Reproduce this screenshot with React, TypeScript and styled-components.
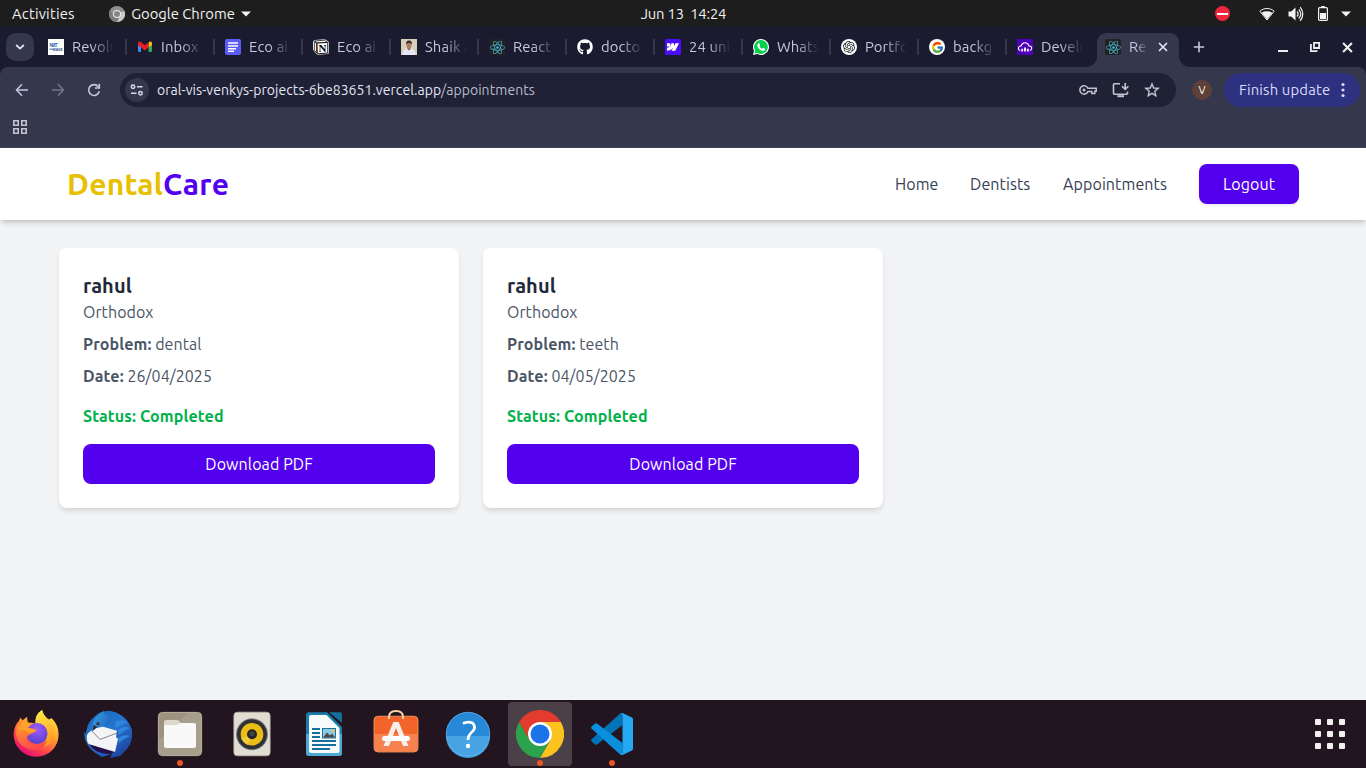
import React from "react";
import styled, { createGlobalStyle } from "styled-components";
import { FaGithub, FaReact, FaWhatsapp } from "react-icons/fa";
import { SiOpenai, SiWebflow } from "react-icons/si";
import { FcGoogle } from "react-icons/fc";

const GlobalStyle = createGlobalStyle`
  *, *::before, *::after { box-sizing: border-box; }
  body { margin: 0; background: #f3f4f6; font-family: Ubuntu, "Noto Sans", sans-serif; }
  h2, p { margin: 0; }
  button { font: inherit; border: 0; padding: 0; }
  svg { display: block; flex: none; }
`;

const Desktop = styled.div`
  width: 1366px;
  height: 768px;
  display: flex;
  flex-direction: column;
  overflow: hidden;
`;

/* ---------- System bar ---------- */

const SystemBar = styled.header`
  height: 27px;
  flex: none;
  display: grid;
  grid-template-columns: 1fr auto 1fr;
  align-items: center;
  background: #1d1d1d;
  color: #f2f2f2;
  font-size: 14.8px;
  line-height: 27px;
  white-space: pre;
`;

const SystemLeft = styled.div`
  display: flex;
  align-items: center;
  padding-left: 12px;
`;

const Label = styled.span<{ $ls?: number }>`
  letter-spacing: ${(p) => p.$ls ?? 0}px;
`;

const Clock = styled(Label)`
  padding-left: 1px;
`;

const AppMenu = styled.div`
  display: flex;
  align-items: center;
  gap: 6px;
  margin-left: 34.5px;
`;

const SystemRight = styled.div`
  display: flex;
  align-items: center;
  justify-content: flex-end;
  padding-right: 15px;
`;

const StatusIcon = styled.span<{ $gap: number }>`
  margin-left: ${(p) => p.$gap}px;
`;

/* ---------- Browser chrome ---------- */

const TabStrip = styled.div`
  height: 40px;
  flex: none;
  display: flex;
  background: #1a1b2f;
  padding-left: 6px;
`;

const TabSearch = styled.button`
  width: 28px;
  height: 28px;
  margin: 6px 6px 0 0;
  border-radius: 10px;
  background: #35374d;
  display: flex;
  align-items: center;
  justify-content: center;
`;

const TabList = styled.div`
  width: 1057px;
  flex: none;
  display: grid;
  grid-template-columns: 89px repeat(11, 88px);
`;

const Tab = styled.div`
  height: 40px;
  display: flex;
  align-items: center;
  padding-left: 8px;
`;

const Favicon = styled.span<{ $bg?: string; $radius?: number }>`
  width: 16px;
  height: 16px;
  flex: none;
  display: flex;
  align-items: center;
  justify-content: center;
  overflow: hidden;
  background: ${(p) => p.$bg ?? "transparent"};
  border-radius: ${(p) => p.$radius ?? 0}px;
`;

const TabTitle = styled.span<{ $width?: number }>`
  width: ${(p) => p.$width ?? 42}px;
  flex: none;
  margin-left: 8px;
  overflow: hidden;
  white-space: nowrap;
  font-size: 14.8px;
  line-height: 20px;
  letter-spacing: 0.12px;
  color: #c5c7e0;
  mask-image: linear-gradient(to right, #000 calc(100% - ${(p) => (p.$width ? 12 : 22)}px), transparent);
`;

const Separator = styled.span`
  width: 2px;
  height: 16px;
  margin-left: 10px;
  background: #35374d;

  ${Tab}:first-child & { margin-left: 11px; }
`;

const ActiveTab = styled.div`
  position: relative;
  width: 82px;
  height: 34px;
  flex: none;
  margin: 6px 0 0;
  padding: 0 11px 6px 8px;
  border-radius: 9px 9px 0 0;
  background: #35374d;
  display: flex;
  align-items: center;

  &::before, &::after {
    content: "";
    position: absolute;
    bottom: 0;
    width: 10px;
    height: 10px;
  }
  &::before { left: -10px; background: radial-gradient(circle at 0 0, transparent 9.5px, #35374d 10px); }
  &::after { right: -10px; background: radial-gradient(circle at 100% 0, transparent 9.5px, #35374d 10px); }
`;

const TabClose = styled.span`
  margin-left: auto;
`;

const WindowControls = styled.div`
  display: flex;
  align-items: center;
  margin-left: auto;
  padding-right: 13px;
  gap: 22px;
`;

const NewTab = styled.span`
  display: flex;
  align-items: center;
  margin-left: 14px;
`;

const BrowserPanelBack = styled.div`
  background: #1a1b2f;
  height: 81px;
  flex: none;
`;

const BrowserPanel = styled.div`
  height: 81px;
  background: #35374d;
  border-radius: 8px 8px 0 0;
  border-bottom: 1px solid #45464f;
`;

const Toolbar = styled.div`
  height: 46px;
  display: flex;
  align-items: center;
  padding: 0 6px 0 14px;
`;

const NavIcons = styled.div`
  display: flex;
  gap: 20px;
  margin-right: 18px;
`;

const Omnibox = styled.div`
  width: 1056px;
  height: 34px;
  flex: none;
  display: flex;
  align-items: center;
  padding: 0 16px 0 5px;
  border-radius: 17px;
  background: #1f2135;
`;

const SiteInfo = styled.span`
  width: 24px;
  height: 24px;
  border-radius: 12px;
  background: #35374d;
  display: flex;
  align-items: center;
  justify-content: center;
`;

const Url = styled.span`
  margin-left: 8px;
  font-size: 14px;
  letter-spacing: 0.06px;
  color: #e4e5f3;
  white-space: nowrap;
`;

const UrlPath = styled.span`
  color: #b9bacb;
`;

const OmniActions = styled.div`
  margin-left: auto;
  display: flex;
  align-items: center;
  gap: 14.5px;
`;

const Avatar = styled.span`
  width: 20px;
  height: 20px;
  margin-left: 16px;
  border-radius: 50%;
  background: #5d4037;
  color: #fff;
  font-size: 11px;
  line-height: 20px;
  text-align: center;
`;

const UpdateButton = styled.button`
  width: 136px;
  height: 34px;
  margin-left: 12px;
  padding: 0 15px;
  border-radius: 17px;
  background: #2d3180;
  color: #d9dbfa;
  font-size: 14.8px;
  line-height: 20px;
  letter-spacing: 0.17px;
  display: flex;
  align-items: center;
  justify-content: space-between;
  white-space: nowrap;
`;

const BookmarksBar = styled.div`
  padding: 7px 0 0 13px;
`;

/* ---------- Page ---------- */

const Page = styled.main`
  height: 552px;
  flex: none;
  background: #f3f4f6;
`;

const SiteHeader = styled.div`
  height: 72px;
  padding: 0 67px;
  background: #fff;
  box-shadow: 0 4px 6px -1px rgba(0, 0, 0, 0.15), 0 2px 4px -2px rgba(0, 0, 0, 0.15);
  display: flex;
  align-items: center;
  justify-content: space-between;
`;

const Brand = styled.div`
  font-size: 30px;
  line-height: 36px;
  font-weight: 700;
  letter-spacing: 0.26px;
  color: #e7c000;
`;

const BrandAccent = styled.span`
  color: #5200ee;
`;

const SiteNav = styled.nav`
  display: flex;
  align-items: center;
  gap: 32px;
`;

const NavLink = styled.a<{ $width: number }>`
  width: ${(p) => p.$width}px;
  letter-spacing: 0.1px;
  color: #364153;
  font-size: 16px;
  line-height: 24px;
  white-space: nowrap;
`;

const PrimaryButton = styled.button<{ $width?: string }>`
  width: ${(p) => p.$width ?? "100%"};
  height: 40px;
  border-radius: 8px;
  background: #5200ee;
  color: #fff;
  font-size: 16px;
  line-height: 24px;
  letter-spacing: 0.1px;
  box-shadow: ${(p) => (p.$width ? "0 1px 3px rgba(0, 0, 0, 0.1)" : "none")};
`;

const CardGrid = styled.section`
  width: 1248px;
  margin: 28px auto 0;
  display: grid;
  grid-template-columns: repeat(3, 1fr);
  gap: 24px;
`;

const Card = styled.article`
  height: 260px;
  padding: 24px;
  border-radius: 8px;
  background: #fff;
  box-shadow: 0 4px 6px -1px rgba(0, 0, 0, 0.1), 0 2px 4px -2px rgba(0, 0, 0, 0.1);
`;

const PatientName = styled.h2`
  font-size: 20px;
  line-height: 28px;
  font-weight: 700;
  letter-spacing: 0.1px;
  color: #1e2939;
`;

const Detail = styled.p<{ $top?: number }>`
  margin-top: ${(p) => p.$top ?? 8}px;
  font-size: 16px;
  line-height: 24px;
  letter-spacing: 0.06px;
  color: #4a5565;
`;

const DetailLabel = styled.b`
  letter-spacing: 0.11px;
`;

const Status = styled.p`
  margin: 16px 0;
  font-size: 16px;
  line-height: 24px;
  font-weight: 700;
  letter-spacing: 0.12px;
  color: #00b04a;
`;

/* ---------- Dock ---------- */

const Dock = styled.footer`
  height: 68px;
  flex: none;
  display: flex;
  align-items: center;
  gap: 8px;
  padding: 0 21px 0 4px;
  background: #22151f;
`;

const DockItem = styled.div<{ $active?: boolean }>`
  position: relative;
  width: 64px;
  height: 64px;
  border-radius: 4px;
  background: ${(p) => (p.$active ? "#4b4048" : "transparent")};
  display: flex;
  align-items: center;
  justify-content: center;
`;

const RunningDot = styled.span`
  position: absolute;
  left: 29px;
  bottom: 0;
  width: 6px;
  height: 6px;
  border-radius: 50%;
  background: #e95420;
`;

const AppGrid = styled.div`
  margin-left: auto;
  display: grid;
  grid-template-columns: repeat(3, 6px);
  gap: 6px;
`;

const GridDot = styled.span`
  width: 6px;
  height: 6px;
  border-radius: 1px;
  background: #f1f0ef;
`;

/* ---------- Drawings ---------- */

const Caret = () => (
  <svg width="10" height="6" viewBox="0 0 10 6"><path d="M0 0.5h10L5 5.5z" fill="#f2f2f2" /></svg>
);

const ChromeMono = () => (
  <svg width="16" height="16" viewBox="0 0 16 16">
    <circle cx="8" cy="8" r="8" fill="#8f8f8f" />
    <path d="M8 8L15.5 5A8 8 0 0 1 8 16z" fill="#c9c9c9" />
    <path d="M1 4A8 8 0 0 0 8 16L11 10 5 10z" fill="#7c7c7c" />
    <circle cx="8" cy="8" r="4" fill="#ececec" />
    <circle cx="8" cy="8" r="3" fill="#858585" />
  </svg>
);

const Wifi = () => (
  <svg width="16" height="14" viewBox="0 0 16 14">
    <path d="M0.8 4.2C5 .6 11 .6 15.2 4.2L8 13z" fill="none" stroke="#f2f2f2" strokeWidth="1" />
    <path d="M2.6 5.6C6 3.8 10 3.8 13.4 5.6L8 12.6z" fill="#f2f2f2" />
  </svg>
);

const Volume = () => (
  <svg width="16" height="16" viewBox="0 0 16 16" fill="none" stroke="#f2f2f2" strokeWidth="1.2">
    <path d="M.5 5.5h2.8L7.5 1.5v13L3.3 10.5H.5z" fill="#f2f2f2" stroke="none" />
    <path d="M9 5.5q2.2 2.5 0 5M10.8 3.5q4 4.5 0 9M12.2 1.2q5.2 6.8 0 13.6" />
  </svg>
);

const Battery = () => (
  <svg width="10" height="15" viewBox="0 0 10 15">
    <path d="M3.2 0h3.6v2H3.2z" fill="#f2f2f2" />
    <rect x=".6" y="1.7" width="8.8" height="12.7" rx="1" fill="none" stroke="#f2f2f2" strokeWidth="1.2" />
    <path d="M2 7h6v6H2z" fill="#f2f2f2" />
  </svg>
);

const NxtWave = () => (
  <svg width="16" height="16" viewBox="0 0 16 16">
    <text x="1.6" y="7.6" fontSize="5" fontWeight="700" fontFamily="Liberation Sans" fill="#2a63a8" textLength="8">NXT</text>
    <path d="M1.6 10.2h3" stroke="#2a63a8" strokeWidth="1" />
    <text x="4.6" y="12" fontSize="4.4" fontWeight="700" fontFamily="Liberation Sans" fill="#2a4a88" textLength="10" lengthAdjust="spacingAndGlyphs">WAVE</text>
  </svg>
);

const Gmail = () => (
  <svg width="16" height="16" viewBox="0 0 16 16">
    <path d="M1 5h3v8H2a1 1 0 0 1-1-1z" fill="#4285f4" />
    <path d="M11.500 6L15 4v8a1 1 0 0 1-1 1h-2.500z" fill="#34a853" />
    <path d="M11.500 3.700C12.800 2 15 2.200 15 4.200V6l-3.500 2.600z" fill="#fbbc04" />
    <path d="M1 4.200C1 2.200 2.900 2 4 3.200L7.800 6.300 11.500 3.400V8.600L7.800 11.600 4 8.600 1 6z" fill="#ea1c25" />
  </svg>
);

const FormDoc = () => (
  <svg width="16" height="16" viewBox="0 0 16 16">
    <path d="M3 4h10M3 7h10M3 9.700h8M3 12.300h6" stroke="#fff" strokeWidth="1.600" />
  </svg>
);

const NotionMark = () => (
  <svg width="16" height="16" viewBox="0 0 16 16">
    <path d="M2.300.9L11 .2q1 0 1.700.5L15.200 2.500q.8.600.8 1.500v9.500q0 1.400-1.400 1.500L5 15.700q-1 .1-1.600-.7L.6 11.500Q0 10.700 0 9.800V3Q0 1.200 2.300.9z" fill="#fff" />
    <path d="M1.400 2.600L3.600 4.200V14L1.300 11.200z" fill="#fff" stroke="#111" strokeWidth=".8" />
    <path d="M1.800 2L11.200 1.200 14.400 3.300 4.200 4z" fill="#fff" stroke="#111" strokeWidth=".8" />
    <path d="M4 4.100L14.800 3.400V14L4.200 14.800z" fill="#fff" stroke="#111" strokeWidth="1" />
    <text x="5.400" y="12.700" fontSize="10" fontWeight="700" fontFamily="Liberation Serif" fill="#000" textLength="8" lengthAdjust="spacingAndGlyphs">N</text>
  </svg>
);

const Portrait = () => (
  <svg width="16" height="16" viewBox="0 0 16 16">
    <rect width="16" height="16" fill="#d6cfbd" />
    <path d="M1.500 16Q2 10 6 9.500h4Q14 10 14.500 16z" fill="#e6e7f2" />
    <path d="M6.500 8h3v2.500L8 11.500 6.500 10.500z" fill="#9b6b50" />
    <ellipse cx="8" cy="5.700" rx="2.600" ry="3.500" fill="#b17d60" />
    <path d="M5.200 5.500Q4.600 1.500 8 1.400T10.800 5.500Q10 3.700 8 3.700T5.200 5.500z" fill="#3a2a26" />
  </svg>
);

const WhatsApp = () => (
  <svg width="16" height="16" viewBox="0 0 16 16">
    <path d="M8 0A8 8 0 1 1 4.300 15.100L0 16 1 11.900A8 8 0 0 1 8 0z" fill="#fff" />
    <path d="M8 1.100A6.900 6.900 0 1 1 4.500 14L1.500 14.600 2.200 11.700A6.900 6.900 0 0 1 8 1.100z" fill="#06cf4b" />
    <path d="M5.200 4.200l1-.1 1 2.200-.8 1q1 1.900 2.700 2.500l1-1 2 1q.1 2-2.100 2.100Q6 11.500 4.400 7q-.3-1.800.8-2.800z" fill="#fff" />
  </svg>
);

const CloudChart = () => (
  <svg width="16" height="16" viewBox="0 0 16 16" fill="none" stroke="#fff">
    <path d="M3.300 11.500Q1 11 1.500 8.700 2 7 4 7 5 3.700 8 3.800T12 7Q15 7.200 14.700 9.500 14.400 11.300 12.800 11.500" strokeWidth="1.100" />
    <path d="M5.200 12.600V9.800M8 12.600V8.600M10.800 12.600V9.800" strokeWidth="1.800" />
  </svg>
);

const Close = ({ size, stroke, color = "#e4e5f3" }: { size: number; stroke: number; color?: string }) => (
  <svg width={size} height={size} viewBox="0 0 10 10"><path d="M1 1l8 8M9 1l-8 8" stroke={color} strokeWidth={stroke} /></svg>
);

const Minimize = () => (
  <svg width="10" height="12" viewBox="0 0 10 12"><path d="M0 10h10" stroke="#eee" strokeWidth="2" /></svg>
);

const Restore = () => (
  <svg width="10" height="10" viewBox="0 0 10 10" fill="none" stroke="#eee" strokeWidth="1.800">
    <path d="M4 .9h5.100V6H4zM.9 2v7.100h6.600" />
  </svg>
);

const Back = ({ color, flip }: { color: string; flip?: boolean }) => (
  <svg width="16" height="16" viewBox="0 0 16 16" fill="none" stroke={color} strokeWidth="1.500">
    <path d={flip ? "M2 8h11.500M8 2.300L13.500 8 8 13.700" : "M14 8H2.500M8 2.300L2.500 8 8 13.700"} />
  </svg>
);

const Reload = () => (
  <svg width="16" height="16" viewBox="0 0 16 16" fill="none" stroke="#c5c7e0" strokeWidth="1.600">
    <path d="M13.300 9.300A5.400 5.400 0 1 1 12.300 4.700" />
    <path d="M13.300 1.800V6H9" />
  </svg>
);

const Tune = () => (
  <svg width="14" height="12" viewBox="0 0 14 12" fill="none" stroke="#d8d9ea" strokeWidth="1.500">
    <circle cx="3" cy="2.700" r="1.700" /><path d="M7 2.700h5.500M1 9.300h5.500" /><circle cx="10.500" cy="9.300" r="1.700" />
  </svg>
);

const Key = () => (
  <svg width="18" height="12" viewBox="0 0 18 12" fill="none" stroke="#c3c4d0" strokeWidth="1.500">
    <path d="M8.900 4.300h8.300v3h-1.400v2.300h-3V7.600H8.900A4.200 4.200 0 1 1 8.900 4.300z" />
    <circle cx="5" cy="6" r="1.500" fill="#c3c4d0" stroke="none" />
  </svg>
);

const Install = () => (
  <svg width="18" height="16" viewBox="0 0 18 16" fill="none" stroke="#c3c4d0" strokeWidth="1.600">
    <path d="M8 1.800H2.500q-1 0-1 1v8.400q0 1 1 1h12q1 0 1-1V9.500" />
    <path d="M5.500 14.200h6.500" strokeWidth="2" />
    <path d="M13.200 1v6M10 4.200l3.200 3.200 3.200-3.200" />
  </svg>
);

const Star = () => (
  <svg width="16" height="16" viewBox="0 0 16 16" fill="none" stroke="#c3c4d0" strokeWidth="1.400">
    <path d="M8 1.900l1.700 4.100 4.500.4-3.400 2.900 1 4.400L8 11.400l-3.800 2.300 1-4.400-3.400-2.900 4.500-.4z" />
  </svg>
);

const Firefox = () => (
  <svg width="48" height="48" viewBox="0 0 48 48">
    <defs>
      <linearGradient id="ffBody" x1=".85" y1="0" x2=".25" y2="1">
        <stop offset="0" stopColor="#fff04a" /><stop offset=".4" stopColor="#ffa52c" /><stop offset=".7" stopColor="#ff4f45" /><stop offset="1" stopColor="#e4007d" />
      </linearGradient>
      <radialGradient id="ffGlobe" cx=".5" cy=".3" r=".8"><stop offset="0" stopColor="#a05bff" /><stop offset="1" stopColor="#4a3ec8" /></radialGradient>
      <linearGradient id="ffTail" x1="0" y1="0" x2=".3" y2="1"><stop offset="0" stopColor="#fff14f" /><stop offset="1" stopColor="#ff9a1f" /></linearGradient>
      <linearGradient id="ffHead" x1="0" y1="0" x2=".4" y2="1"><stop offset="0" stopColor="#ff9a2b" /><stop offset="1" stopColor="#ff4a4a" /></linearGradient>
    </defs>
    <path d="M1.700 25C1.500 19 4 14 6.500 11.500L8.500 7.500 10.500 10.500 15 7 15.500 12.500Q20 12.500 23.500 13.500 22.500 5 30 0 31.500 6 37 9.500L39.500 8Q46.600 15 46.600 24.500A22.400 22 0 0 1 1.700 25z" fill="url(#ffBody)" />
    <path d="M23.500 13.500Q22.500 5 30 0 31.500 6 37 10.500 43.500 17 41.500 27 39 36 30 37 35 31 34.500 24 32 15 23.500 13.500z" fill="url(#ffTail)" />
    <circle cx="25" cy="23.500" r="10.500" fill="url(#ffGlobe)" />
    <path d="M5 16Q10 14 15.500 17.500L24.500 19.500Q24.500 22 18.500 24 13 27 15 31 19 35.500 26 34.500 31 34 35 30 33 41 20 40 6 37 4 24z" fill="url(#ffHead)" />
    <path d="M6 20Q9 15.500 16 18L24 20Q22 22.500 17 23 12 19 6 20z" fill="#ffa32b" />
    <path d="M10.500 10.500L15 7 15.500 12.500Q18 12.500 20.500 14 17 15 15.500 18L8 16z" fill="#ffa32b" />
  </svg>
);

const Thunderbird = () => (
  <svg width="48" height="48" viewBox="0 0 48 48">
    <defs>
      <linearGradient id="tbBody" x1=".2" y1="0" x2=".9" y2="1"><stop offset="0" stopColor="#1d6cc0" /><stop offset=".45" stopColor="#2574cf" /><stop offset="1" stopColor="#1c3c96" /></linearGradient>
      <linearGradient id="tbHead" x1="0" y1="0" x2="1" y2=".6"><stop offset="0" stopColor="#3ba5e0" /><stop offset="1" stopColor="#1f68c4" /></linearGradient>
    </defs>
    <path d="M9 8Q17-1 28 1.500 43 5 48 20 49.500 31 43 39L36 46 26 48 28 44 18 47Q4 40 1 29L0 22 2 24Q3 13 9 8z" fill="url(#tbBody)" />
    <path d="M4 33L33 40 27 44Q12 45 4 33z" fill="#25104a" />
    <path d="M2.800 26.500Q3 23 8 20.500L13 15 34 21V40L31 42 4.500 34Q2.600 31 2.800 26.500z" fill="#f4f4f7" />
    <path d="M8 21L16 29.500 33 23" fill="none" stroke="#85858f" strokeWidth="1" />
    <path d="M12 18Q19 17.500 24 13L33 20 32 27 34 29 31 42 28 46Q40 41 44 34 49 24 45 14 38 3 26 1 14 2 11 12z" fill="url(#tbBody)" />
    <path d="M31 12Q38 8 44 13 38 13 32 18zM34 20Q40 15 46 18 40 20 35 25zM34 28Q40 24 46.500 26 40 28 35 33z" fill="#3187dc" />
    <path d="M8.500 21Q7 8 20 .8 18.500 3.500 24 6 29 11 23 14.500 18 17 13 17z" fill="url(#tbHead)" />
    <path d="M9.500 15L8.500 21 13.500 17z" fill="#30323a" />
    <circle cx="14" cy="13.700" r="1.700" fill="#3a3444" />
  </svg>
);

const Files = () => (
  <svg width="48" height="48" viewBox="0 0 48 48">
    <rect x="2.400" y="2.400" width="43.200" height="43.200" rx="4" fill="#9d937f" stroke="#bdb5a5" strokeWidth="1" />
    <path d="M2.900 30L32 2.900H41.600q3.500 0 3.500 3.500V41.200q0 4-4 4H6.500q-3.600 0-3.600-4z" fill="#a79e8b" />
    <rect x="8" y="13" width="32" height="25" rx="2" fill="#f9f9f9" />
    <path d="M8 15V12q0-2 2-2h11q2 0 3 2l.6 1q-2 2-4 2z" fill="#ded8cb" />
  </svg>
);

const Rhythmbox = () => (
  <svg width="48" height="48" viewBox="0 0 48 48">
    <rect x="5.900" y="2.200" width="36.200" height="43.600" rx="3.500" fill="#e2ddd1" stroke="#bdb8ae" strokeWidth=".8" />
    <circle cx="24" cy="24.300" r="16" fill="#85858a" />
    <circle cx="24" cy="24.300" r="15" fill="#2f3033" />
    <circle cx="24" cy="24.300" r="11.300" fill="#e9bc18" />
    <path d="M13 28A11.300 11.300 0 0 0 20 35L24 25z" fill="#f5d84d" opacity=".6" />
    <circle cx="24" cy="24.300" r="5" fill="#252525" /><circle cx="24" cy="23.800" r="2.500" fill="#444" />
  </svg>
);

const Writer = () => (
  <svg width="48" height="48" viewBox="0 0 48 48">
    <path d="M10 2.200H27L42 17V43q0 3-3 3H9q-3 0-3-3V5q0-3 4-3z" fill="#1b7cab" />
    <path d="M6 24H42V43q0 3-3 3H9q-3 0-3-3z" fill="#4ba9d3" />
    <path d="M29 2.200H40q2 0 2 2V13z" fill="#13709c" />
    <path d="M11 5H26.500L39.500 18V41q0 2-2 2H11q-2 0-2-2V7q0-2 2-2z" fill="#f8fbfc" />
    <path d="M12 19h8M12 23h8M12 27h8M12 31h24M12 35h24M12 39h18" stroke="#146f9f" strokeWidth="2" />
    <rect x="22.500" y="18.500" width="13" height="9.500" fill="#89cce9" stroke="#1d739b" />
    <path d="M23 27.500l4-5 3 3 2-2 3 4z" fill="#504a46" /><circle cx="33" cy="20.800" r="1.500" fill="#f6c33c" />
  </svg>
);

const Software = () => (
  <svg width="48" height="48" viewBox="0 0 48 48">
    <rect x="2" y="6.200" width="44" height="35.800" rx="4" fill="#f26429" stroke="#f9a16d" strokeWidth=".8" />
    <path d="M2.500 24h43V38q0 3.600-3.600 3.600H6q-3.500 0-3.500-3.600z" fill="#f5824f" />
    <path d="M17 9V7Q17 1 24 1T31 7V9" fill="none" stroke="#f8d4a8" strokeWidth="2" />
    <path d="M21.300 12H26.700L36.500 36H31L24 18 17 36H11.500z" fill="#f7efeb" />
    <rect x="10" y="26" width="28" height="5" rx="2.500" fill="#fff" />
  </svg>
);

const Help = () => (
  <svg width="48" height="48" viewBox="0 0 48 48">
    <circle cx="24" cy="24" r="22" fill="#2788d8" />
    <path d="M2 26a22 22 0 0 0 44 0z" fill="#47a3e3" />
    <circle cx="24" cy="24" r="21.700" fill="none" stroke="#66b3ea" strokeWidth=".7" />
    <path d="M19 13.500Q24 11 28.500 13 32.500 17 29 21 24 25 24 30" fill="none" stroke="#fff" strokeWidth="2.800" />
    <circle cx="24" cy="36" r="2.200" fill="#fff" />
  </svg>
);

const Chrome = () => (
  <svg width="48" height="48" viewBox="0 0 48 48">
    <path d="M24 24L3.200 12A24 24 0 0 1 44.800 12z" fill="#e33b2e" />
    <path d="M24 12H44.800A24 24 0 0 1 24 48L34.400 30z" fill="#fcc31e" />
    <path d="M13.600 30L3.200 12A24 24 0 0 0 24 48L34.400 30z" fill="#2ba24c" />
    <path d="M3.200 12L13.600 30 24 24V12z" fill="#e33b2e" />
    <circle cx="24" cy="24" r="12" fill="#fff" /><circle cx="24" cy="24" r="9.500" fill="#1a73e8" />
  </svg>
);

const VsCode = () => (
  <svg width="48" height="48" viewBox="0 0 48 48">
    <path d="M34.500 3L34.500 15 9 34.500Q8 35.200 7 34.500L3.400 31.300Q2.600 30.200 3.400 29.500L31 4.500Q33 2.600 34.500 3z" fill="#0074b9" />
    <path d="M34.500 45V33L9 13.500Q8 12.800 7 13.500L3.400 16.700Q2.600 17.800 3.400 18.500L31 43.500Q33 45.400 34.500 45z" fill="#0a8fdc" />
    <path d="M34.500 3L44 7.400Q45 8 45 9.200V38.800Q45 40 44 40.600L34.500 45Q32.800 45.400 31.500 44 34.500 45.500 34.500 42.500V5.500Q34.500 2.500 31.500 4 32.800 2.600 34.500 3z" fill="#23a8f2" />
  </svg>
);

/* ---------- Data ---------- */

type TabData = { title: string; icon: React.ReactNode; bg?: string; radius?: number };

const tabs: TabData[] = [
  { title: "Revolu", icon: <NxtWave />, bg: "#fff" },
  { title: "Inbox", icon: <Gmail /> },
  { title: "Eco ai", icon: <FormDoc />, bg: "#5b5bf5", radius: 2 },
  { title: "Eco ai", icon: <NotionMark /> },
  { title: "Shaik A", icon: <Portrait /> },
  { title: "React", icon: <FaReact size={15} color="#45b5cf" />, bg: "#222", radius: 2 },
  { title: "doctor", icon: <FaGithub size={16} color="#fff" /> },
  { title: "24 uni", icon: <SiWebflow size={12} color="#fff" />, bg: "#4a0df5", radius: 1 },
  { title: "Whats", icon: <WhatsApp /> },
  { title: "Portfo", icon: <SiOpenai size={12} color="#222" />, bg: "#fff", radius: 8 },
  { title: "backgr", icon: <FcGoogle size={13} />, bg: "#fff", radius: 8 },
  { title: "Develo", icon: <CloudChart />, bg: "#4e00b8" },
];

const appointments = [
  { name: "rahul", specialty: "Orthodox", problem: "dental", date: "26/04/2025" },
  { name: "rahul", specialty: "Orthodox", problem: "teeth", date: "04/05/2025" },
];

const dockApps = [
  { id: "firefox", icon: <Firefox /> },
  { id: "thunderbird", icon: <Thunderbird /> },
  { id: "files", icon: <Files />, running: true },
  { id: "rhythmbox", icon: <Rhythmbox /> },
  { id: "writer", icon: <Writer /> },
  { id: "software", icon: <Software /> },
  { id: "help", icon: <Help /> },
  { id: "chrome", icon: <Chrome />, running: true, active: true },
  { id: "vscode", icon: <VsCode />, running: true },
];

export default function App() {
  return (
    <Desktop>
      <GlobalStyle />
      <SystemBar>
        <SystemLeft>
          <Label $ls={0.2}>Activities</Label>
          <AppMenu><ChromeMono /><Label>Google Chrome</Label><Caret /></AppMenu>
        </SystemLeft>
        <Clock $ls={-0.2}>Jun 13  14:24</Clock>
        <SystemRight>
          <StatusIcon $gap={0}>
            <svg width="16" height="16" viewBox="0 0 16 16"><circle cx="8.500" cy="7.500" r="7.500" fill="#f0263f" /><path d="M3 8h11" stroke="#fff" strokeWidth="2" /></svg>
          </StatusIcon>
          <StatusIcon $gap={29}><Wifi /></StatusIcon>
          <StatusIcon $gap={13}><Volume /></StatusIcon>
          <StatusIcon $gap={14}><Battery /></StatusIcon>
          <StatusIcon $gap={13}><Caret /></StatusIcon>
        </SystemRight>
      </SystemBar>

      <TabStrip>
        <TabSearch>
          <svg width="10" height="6" viewBox="0 0 10 6"><path d="M1.200 1l3.800 3.600L8.800 1" fill="none" stroke="#e4e5f3" strokeWidth="1.800" /></svg>
        </TabSearch>
        <TabList>
          {tabs.map((tab, i) => (
            <Tab key={i}>
              <Favicon $bg={tab.bg} $radius={tab.radius}>{tab.icon}</Favicon>
              <TabTitle>{tab.title}</TabTitle>
              {i < tabs.length - 1 && <Separator />}
            </Tab>
          ))}
        </TabList>
        <ActiveTab>
          <Favicon $bg="#222" $radius={2}><FaReact size={15} color="#45b5cf" /></Favicon>
          <TabTitle $width={19}>Re</TabTitle>
          <TabClose><Close size={10} stroke={1.7} /></TabClose>
        </ActiveTab>
        <NewTab>
          <svg width="12" height="12" viewBox="0 0 12 12"><path d="M6 .8v10.400M.8 6h10.400" stroke="#c5c7e0" strokeWidth="1.600" /></svg>
        </NewTab>
        <WindowControls><Minimize /><Restore /><Close size={11} stroke={1.9} color="#eee" /></WindowControls>
      </TabStrip>

      <BrowserPanelBack>
        <BrowserPanel>
          <Toolbar>
            <NavIcons><Back color="#c5c7e0" /><Back color="#74768d" flip /><Reload /></NavIcons>
            <Omnibox>
              <SiteInfo><Tune /></SiteInfo>
              <Url>oral-vis-venkys-projects-6be83651.vercel.app<UrlPath>/appointments</UrlPath></Url>
              <OmniActions><Key /><Install /><Star /></OmniActions>
            </Omnibox>
            <Avatar>V</Avatar>
            <UpdateButton>
              Finish update
              <svg width="4" height="16" viewBox="0 0 4 16" fill="#d9dbfa"><circle cx="2" cy="2.500" r="1.600" /><circle cx="2" cy="8" r="1.600" /><circle cx="2" cy="13.500" r="1.600" /></svg>
            </UpdateButton>
          </Toolbar>
          <BookmarksBar>
            <svg width="14" height="14" viewBox="0 0 14 14" fill="none" stroke="#c3c4d0" strokeWidth="1.600"><path d="M.8.800h4.400v4.400H.8zM8.800.800h4.400v4.400H8.800zM.8 8.800h4.400v4.400H.8zM8.800 8.800h4.400v4.400H8.800z" /></svg>
          </BookmarksBar>
        </BrowserPanel>
      </BrowserPanelBack>

      <Page>
        <SiteHeader>
          <Brand>Dental<BrandAccent>Care</BrandAccent></Brand>
          <SiteNav>
            <NavLink $width={43}>Home</NavLink>
            <NavLink $width={61}>Dentists</NavLink>
            <NavLink $width={104}>Appointments</NavLink>
            <PrimaryButton $width="100px">Logout</PrimaryButton>
          </SiteNav>
        </SiteHeader>
        <CardGrid>
          {appointments.map((a) => (
            <Card key={a.date}>
              <PatientName>{a.name}</PatientName>
              <Detail $top={0}>{a.specialty}</Detail>
              <Detail><DetailLabel>Problem:</DetailLabel> {a.problem}</Detail>
              <Detail><DetailLabel>Date:</DetailLabel> {a.date}</Detail>
              <Status>Status: Completed</Status>
              <PrimaryButton>Download PDF</PrimaryButton>
            </Card>
          ))}
        </CardGrid>
      </Page>

      <Dock>
        {dockApps.map((app) => (
          <DockItem key={app.id} $active={app.active}>
            {app.icon}
            {app.running && <RunningDot />}
          </DockItem>
        ))}
        <AppGrid>{Array.from({ length: 9 }, (_, i) => <GridDot key={i} />)}</AppGrid>
      </Dock>
    </Desktop>
  );
}
